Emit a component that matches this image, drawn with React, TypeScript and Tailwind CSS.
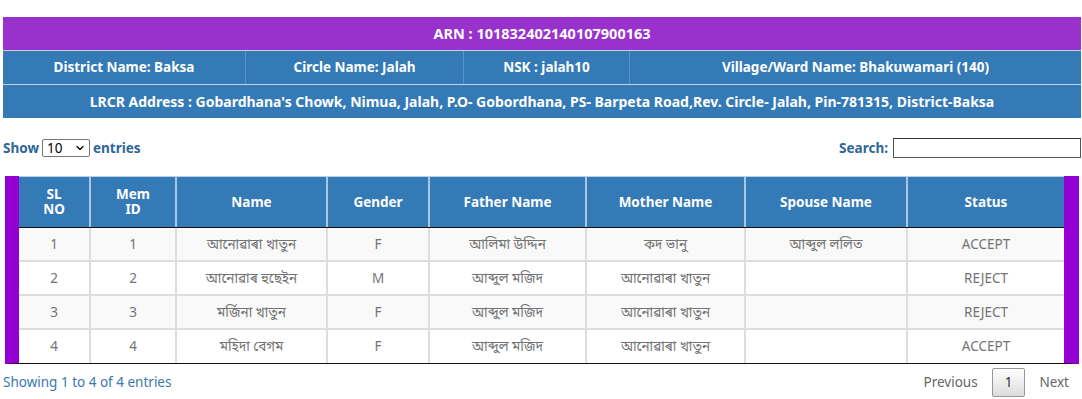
import { ChevronDown } from "lucide-react";

const rows = [
  { sl: "1", id: "1", name: "আনোৱাৰা খাতুন", gender: "F", father: "আলিমা উদ্দিন", mother: "কদ ভানু", spouse: "আব্দুল ললিত", status: "ACCEPT" },
  { sl: "2", id: "2", name: "আনোৱাৰ হুছেইন", gender: "M", father: "আব্দুল মজিদ", mother: "আনোৱাৰা খাতুন", spouse: "", status: "REJECT" },
  { sl: "3", id: "3", name: "মৰ্জিনা খাতুন", gender: "F", father: "আব্দুল মজিদ", mother: "আনোৱাৰা খাতুন", spouse: "", status: "REJECT" },
  { sl: "4", id: "4", name: "মহিদা বেগম", gender: "F", father: "আব্দুল মজিদ", mother: "আনোৱাৰা খাতুন", spouse: "", status: "ACCEPT" },
];

const cols = "grid grid-cols-[72px_86px_151px_102px_157px_159px_162px_156px]";

export default function App() {
  return (
    <div
      className="min-h-screen bg-white pt-[17px] pl-[3px] pr-[1px] text-[13.5px]"
      style={{ fontFamily: '"Noto Sans", "Noto Sans Bengali", sans-serif' }}
    >
      {/* ARN info block */}
      <div className="text-white font-bold text-[13.5px]">
        <div className="h-[34px] flex items-center justify-center bg-[#9932cc] border-b border-[#c4d2e4] text-[14.5px]">
          ARN : 101832402140107900163
        </div>
        <div className="h-[34px] grid grid-cols-[243px_218px_166px_1fr] bg-[#337ab7] border-b border-[#c4d2e4]">
          <div className="flex items-center justify-center border-r border-[#5b93c6]">District Name: Baksa</div>
          <div className="flex items-center justify-center border-r border-[#5b93c6]">Circle Name: Jalah</div>
          <div className="flex items-center justify-center border-r border-[#5b93c6]">NSK : jalah10</div>
          <div className="flex items-center justify-center">Village/Ward Name: Bhakuwamari (140)</div>
        </div>
        <div className="h-[33px] flex items-center justify-center bg-[#337ab7] text-[14px]">
          LRCR Address : Gobardhana's Chowk, Nimua, Jalah, P.O- Gobordhana, PS- Barpeta Road,Rev. Circle- Jalah, Pin-781315, District-Baksa
        </div>
      </div>

      {/* length + search */}
      <div className="mt-[20px] h-[20px] flex items-center justify-between font-bold text-[#2d6699]">
        <div className="flex items-center gap-[3px]">
          <span>Show</span>
          <div className="w-[48px] h-[18px] flex items-center justify-between pl-[4px] pr-[3px] border border-[#767676] rounded-[2px] font-normal text-black bg-white">
            <span>10</span>
            <ChevronDown size={12} strokeWidth={2.5} />
          </div>
          <span>entries</span>
        </div>
        <div className="flex items-center gap-[5px]">
          <span>Search:</span>
          <input className="w-[188px] h-[20px] border border-[#555] border-t-[#333] bg-white outline-none" />
        </div>
      </div>

      {/* table */}
      <div className="mt-[18px] mx-[2px] border-l-[14px] border-r-[15px] border-l-[#9400d3] border-r-[#9400d3] border-b border-b-[#111]">
        <div className={`${cols} bg-[#337ab7] text-white font-bold border-t border-[#b9d0e8] border-b border-b-[#111]`}>
          {["SL NO", "Mem ID", "Name", "Gender", "Father Name", "Mother Name", "Spouse Name", "Status"].map((h, i) => (
            <div
              key={h}
              className={`h-[50px] flex items-center justify-center text-center leading-[15px] ${i < 7 ? "border-r-2 border-[#a9c6e2]" : ""} ${i < 2 ? "px-[20px]" : ""}`}
            >
              {h}
            </div>
          ))}
        </div>
        {rows.map((r, ri) => (
          <div
            key={r.sl}
            className={`${cols} text-[#737373] ${ri % 2 === 0 ? "bg-[#f9f9f9]" : "bg-white"} ${ri < 3 ? "border-b-2 border-[#ddd]" : ""}`}
          >
            {[r.sl, r.id, r.name, r.gender, r.father, r.mother, r.spouse, r.status].map((c, ci) => (
              <div
                key={ci}
                className={`${ri < 3 ? "h-[32px]" : "h-[33px]"} flex items-center justify-center ${ci < 7 ? "border-r-2 border-[#ddd]" : ""}`}
              >
                {c}
              </div>
            ))}
          </div>
        ))}
      </div>

      {/* footer */}
      <div className="mt-[4px] flex items-center justify-between">
        <div className="text-[#3a78ad]">Showing 1 to 4 of 4 entries</div>
        <div className="flex items-center gap-[2px] text-[#666]">
          <span className="h-[29px] px-[12px] flex items-center">Previous</span>
          <span className="h-[29px] px-[12px] flex items-center text-[#333] border border-[#979797] rounded-[2px] bg-gradient-to-b from-white to-[#dcdcdc]">1</span>
          <span className="h-[29px] pl-[12px] pr-[12px] flex items-center">Next</span>
        </div>
      </div>
    </div>
  );
}
